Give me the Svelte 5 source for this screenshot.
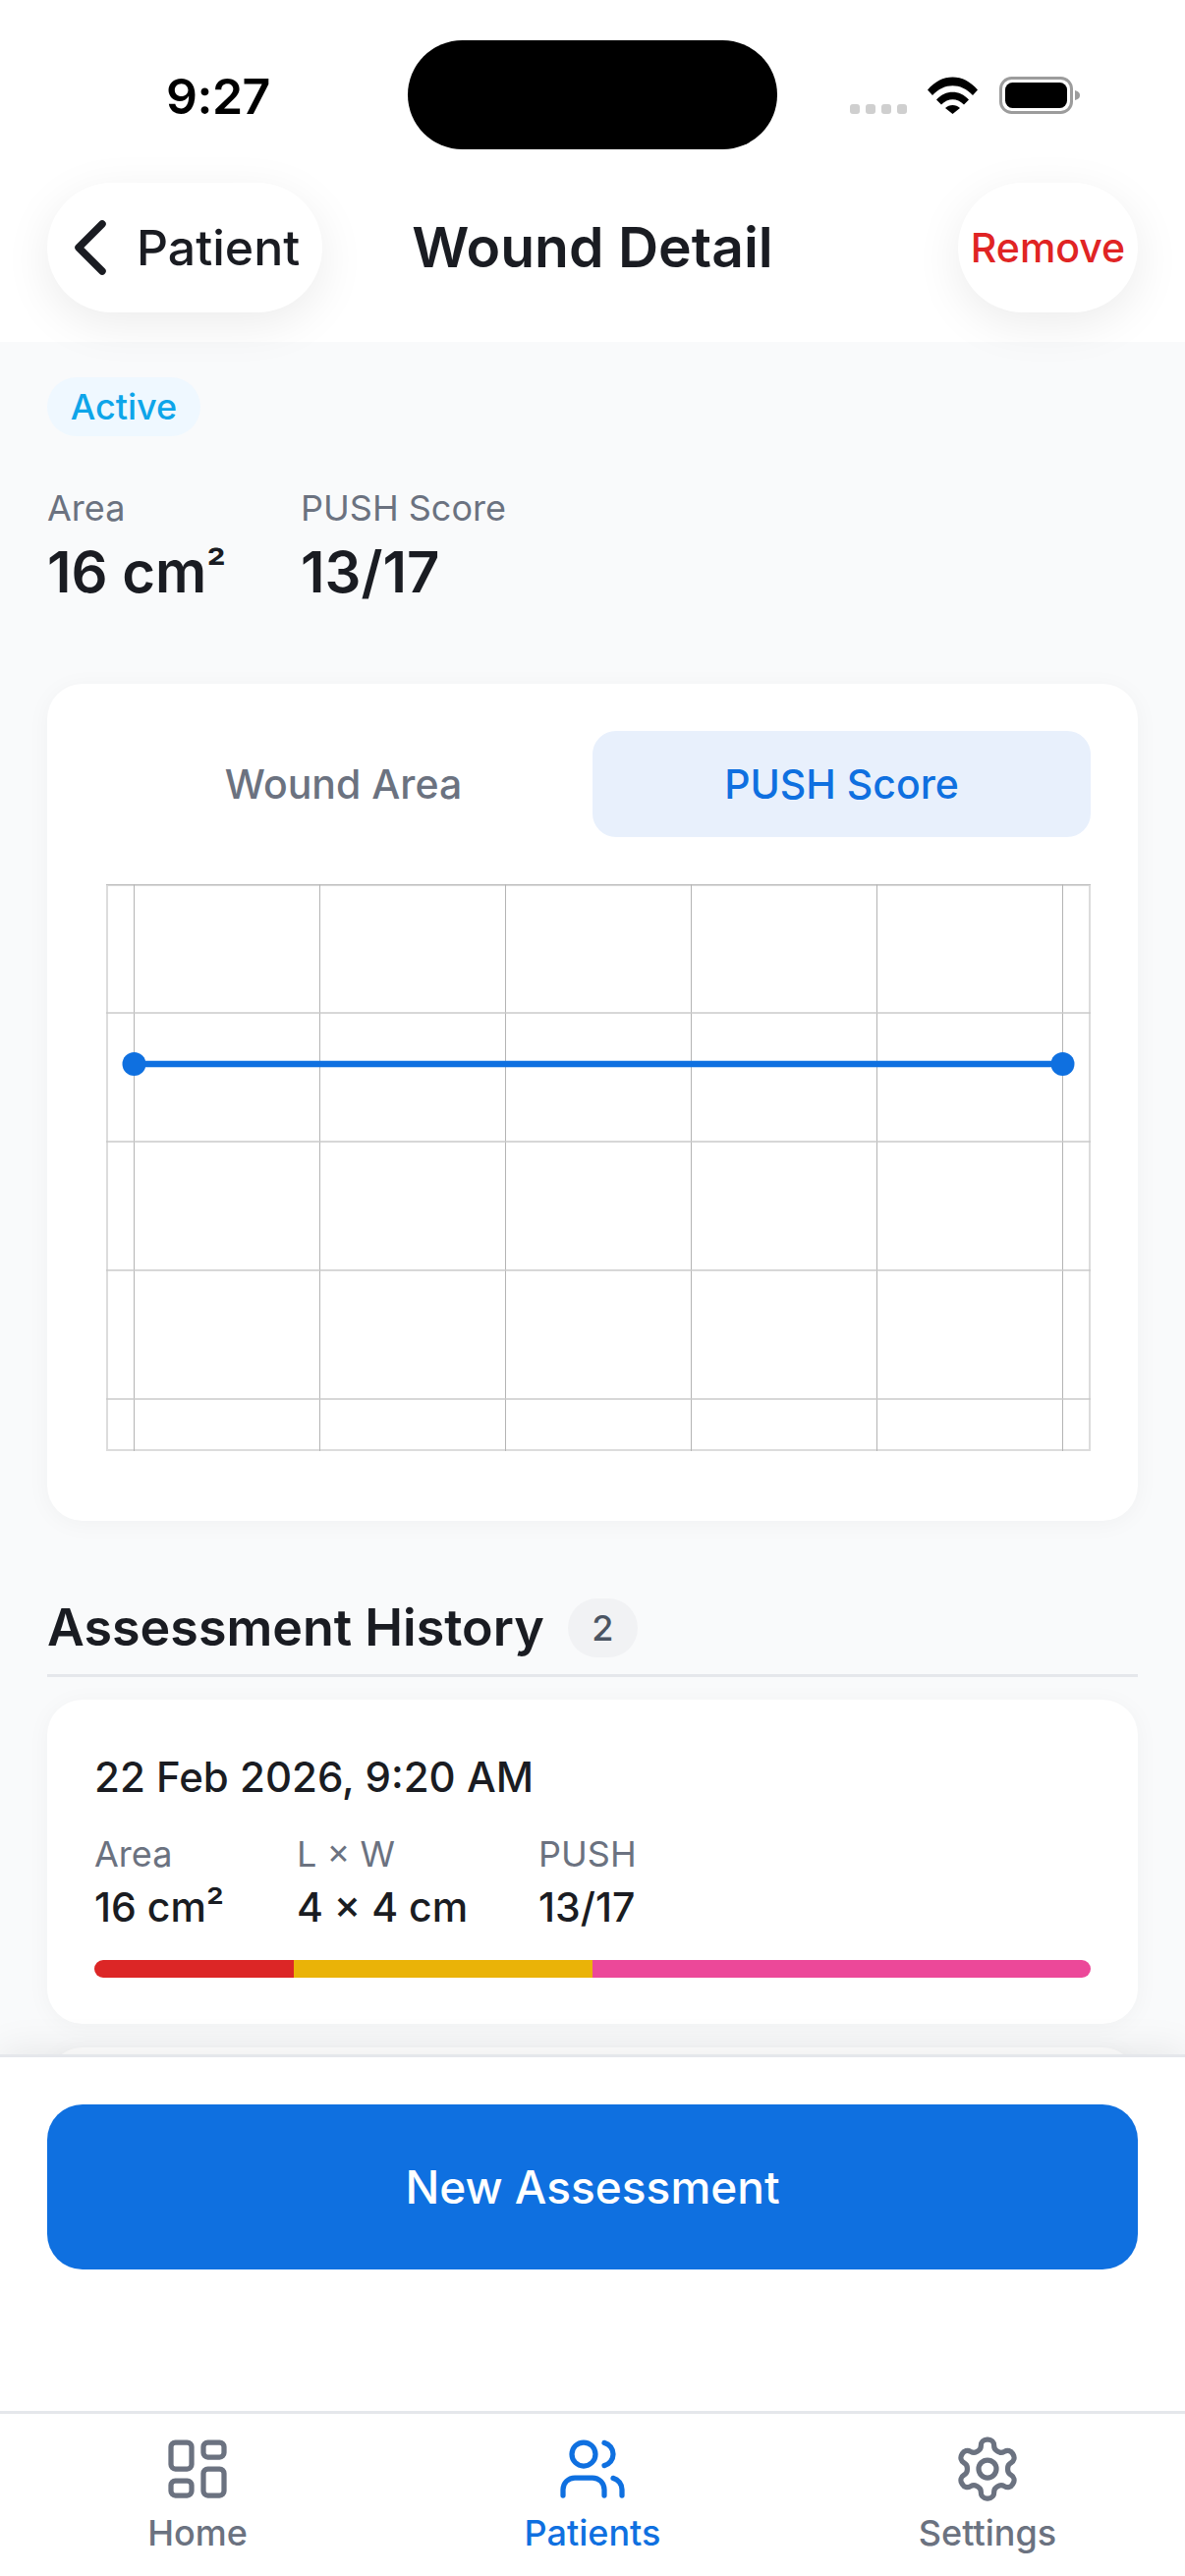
<script>
  const vLines = [28.5, 217.5, 406.5, 595.5, 784.5, 973.5];
  const hLines = [131, 262, 393, 524];
  const metrics = [
    { label: 'Area', value: '16 cm²' },
    { label: 'L × W', value: '4 × 4 cm' },
    { label: 'PUSH', value: '13/17' }
  ];
</script>

<div class="screen">
  <header class="top">
    <div class="status">
      <span class="time">9:27</span>
      <div class="island"></div>
      <div class="status-icons">
        <div class="dots"><i></i><i></i><i></i><i></i></div>
        <svg class="wifi" viewBox="0 0 51 38" width="51" height="38" aria-hidden="true">
          <path d="M0 13.5 C14 -4 37 -4 51 13.5 L46 19 C34 6 17 6 5 19 Z" fill="#000"/>
          <path d="M9 23.5 C18 13 33 13 42 23.5 L37 28.5 C30 21.5 21 21.5 14 28.5 Z" fill="#000"/>
          <path d="M18 32 C22 28 29 28 33 32 L25.5 38 Z" fill="#000"/>
        </svg>
        <svg class="battery" viewBox="0 0 83 38" width="83" height="38" aria-hidden="true">
          <rect x="1.5" y="1.5" width="72" height="35" rx="11" fill="none" stroke="#9c9c9c" stroke-width="3"/>
          <rect x="6" y="6" width="63" height="26" rx="7.5" fill="#000"/>
          <path d="M77 14 C81 15 82 17 82 19 C82 21 81 23 77 24 Z" fill="#9c9c9c"/>
        </svg>
      </div>
    </div>
    <nav class="navbar">
      <button class="pill back">
        <svg viewBox="0 0 36 60" width="36" height="60" aria-hidden="true">
          <path d="M31 6 L7 30 L31 54" fill="none" stroke="#1a1c22" stroke-width="7.5" stroke-linecap="round" stroke-linejoin="round"/>
        </svg>
        <span>Patient</span>
      </button>
      <h1>Wound Detail</h1>
      <button class="pill remove">Remove</button>
    </nav>
  </header>

  <main class="content">
    <span class="badge">Active</span>
    <div class="stats">
      <div><div class="stat-label">Area</div><div class="stat-value">16 cm<span class="sup">²</span></div></div>
      <div><div class="stat-label">PUSH Score</div><div class="stat-value">13/17</div></div>
    </div>

    <section class="card chart-card">
      <div class="tabs">
        <div class="tab">Wound Area</div>
        <div class="tab active">PUSH Score</div>
      </div>
      <svg class="chart" viewBox="0 0 1002 578" width="1002" height="578" aria-hidden="true">
        <rect x="1" y="1" width="1000" height="575" fill="none" stroke="#dcdcdc" stroke-width="2"/>
        <line x1="0" x2="1002" y1="0.5" y2="0.5" stroke="#bdbdbd" stroke-width="1"/>
        {#each vLines as x}
          <line x1={x} x2={x} y1="0" y2="577" stroke="#b4b4b4" stroke-width="1"/>
        {/each}
        {#each hLines as y}
          <line x1="0" x2="1002" y1={y} y2={y} stroke="#cacaca" stroke-width="1.5"/>
        {/each}
        <line x1="28.5" x2="974" y1="183" y2="183" stroke="#0f70e0" stroke-width="6.5"/>
        <circle cx="28.5" cy="183" r="12" fill="#0f70e0"/>
        <circle cx="973.5" cy="183" r="12" fill="#0f70e0"/>
      </svg>
    </section>

    <div class="section-head">
      <h2>Assessment History</h2>
      <span class="count">2</span>
    </div>

    <section class="card history">
      <div class="date">22 Feb 2026, 9:20 AM</div>
      <div class="metrics">
        {#each metrics as m}
          <div>
            <div class="m-label">{m.label}</div>
            <div class="m-value">{m.value}</div>
          </div>
        {/each}
      </div>
      <div class="bar"><i class="red"></i><i class="yellow"></i><i class="pink"></i></div>
    </section>
    <section class="card history"></section>
  </main>

  <div class="action">
    <button class="primary">New Assessment</button>
  </div>

  <footer class="tabbar">
    <div class="tabitem">
      <svg viewBox="0 0 24 24" width="72" height="72" fill="none" stroke="currentColor" stroke-width="1.75" stroke-linecap="round" stroke-linejoin="round" aria-hidden="true">
        <rect x="3" y="3" width="7" height="9" rx="1.5"/>
        <rect x="14" y="3" width="7" height="5" rx="1.5"/>
        <rect x="14" y="12" width="7" height="9" rx="1.5"/>
        <rect x="3" y="16" width="7" height="5" rx="1.5"/>
      </svg>
      <span>Home</span>
    </div>
    <div class="tabitem on">
      <svg viewBox="0 0 24 24" width="72" height="72" fill="none" stroke="currentColor" stroke-width="1.75" stroke-linecap="round" stroke-linejoin="round" aria-hidden="true">
        <path d="M16 21v-2a4 4 0 0 0-4-4H6a4 4 0 0 0-4 4v2"/>
        <circle cx="9" cy="7" r="4"/>
        <path d="M22 21v-2a4 4 0 0 0-3-3.87"/>
        <path d="M16 3.13a4 4 0 0 1 0 7.75"/>
      </svg>
      <span>Patients</span>
    </div>
    <div class="tabitem">
      <svg viewBox="0 0 24 24" width="72" height="72" fill="none" stroke="currentColor" stroke-width="1.75" stroke-linecap="round" stroke-linejoin="round" aria-hidden="true">
        <path d="M12.22 2h-.44a2 2 0 0 0-2 2v.18a2 2 0 0 1-1 1.73l-.43.25a2 2 0 0 1-2 0l-.15-.08a2 2 0 0 0-2.73.73l-.22.38a2 2 0 0 0 .73 2.73l.15.1a2 2 0 0 1 1 1.72v.51a2 2 0 0 1-1 1.74l-.15.09a2 2 0 0 0-.73 2.73l.22.38a2 2 0 0 0 2.73.73l.15-.08a2 2 0 0 1 2 0l.43.25a2 2 0 0 1 1 1.73V20a2 2 0 0 0 2 2h.44a2 2 0 0 0 2-2v-.18a2 2 0 0 1 1-1.73l.43-.25a2 2 0 0 1 2 0l.15.08a2 2 0 0 0 2.73-.73l.22-.39a2 2 0 0 0-.73-2.73l-.15-.08a2 2 0 0 1-1-1.74v-.5a2 2 0 0 1 1-1.74l.15-.09a2 2 0 0 0 .73-2.73l-.22-.38a2 2 0 0 0-2.73-.73l-.15.08a2 2 0 0 1-2 0l-.43-.25a2 2 0 0 1-1-1.73V4a2 2 0 0 0-2-2z"/>
        <circle cx="12" cy="12" r="3"/>
      </svg>
      <span>Settings</span>
    </div>
  </footer>
</div>

<style>
  :global(body) {
    margin: 0;
    background: #f9fafb;
  }
  .screen {
    width: 1206px;
    height: 2622px;
    display: flex;
    flex-direction: column;
    overflow: hidden;
    background: #f9fafb;
    font-family: Inter, "Liberation Sans", sans-serif;
    color: #1a1c22;
  }
  .top {
    height: 348px;
    flex: none;
    background: #fff;
    position: relative;
    z-index: 2;
  }
  .status {
    height: 186px;
    position: relative;
  }
  .time {
    position: absolute;
    left: 169px;
    top: 69px;
    font-size: 50px;
    line-height: 58px;
    font-weight: 600;
    color: #000;
    letter-spacing: -0.5px;
  }
  .island {
    position: absolute;
    left: 415px;
    top: 41px;
    width: 376px;
    height: 111px;
    border-radius: 56px;
    background: #000;
  }
  .status-icons {
    position: absolute;
    left: 865px;
    top: 78px;
    display: flex;
    align-items: flex-start;
  }
  .dots {
    display: flex;
    gap: 6px;
    margin-top: 28px;
    margin-right: 21px;
  }
  .dots i {
    width: 10px;
    height: 10px;
    border-radius: 3px;
    background: #cfcfcf;
  }
  .wifi { margin-right: 22px; }
  .navbar {
    display: flex;
    justify-content: space-between;
    align-items: center;
    padding: 0 48px;
    position: relative;
  }
  .pill {
    height: 132px;
    border: 0;
    border-radius: 66px;
    background: #fff;
    font: inherit;
    box-shadow: 0 12px 48px rgba(0, 0, 0, 0.08);
    display: flex;
    align-items: center;
    padding: 0;
  }
  .back {
    width: 280px;
    padding-left: 25px;
    gap: 30px;
    font-size: 50px;
    font-weight: 500;
    color: #1a1c22;
  }
  .remove {
    width: 183px;
    justify-content: center;
    font-size: 41px;
    font-weight: 500;
    color: #e02424;
  }
  h1 {
    position: absolute;
    left: 0;
    right: 0;
    top: 30px;
    margin: 0;
    text-align: center;
    font-size: 57px;
    line-height: 72px;
    font-weight: 600;
    color: #1a1c22;
    pointer-events: none;
  }
  .content {
    flex: 1;
    min-height: 0;
    overflow: hidden;
    padding: 36px 48px 0;
  }
  .badge {
    display: block;
    width: 156px;
    height: 60px;
    line-height: 60px;
    text-align: center;
    border-radius: 30px;
    background: #eff8ff;
    color: #0ea5e9;
    font-size: 36px;
    font-weight: 500;
  }
  .stats {
    display: grid;
    grid-template-columns: 258px auto;
    justify-content: start;
    margin-top: 49px;
  }
  .stat-label {
    font-size: 36px;
    line-height: 48px;
    color: #6b7280;
  }
  .stat-value {
    font-size: 58px;
    line-height: 72px;
    font-weight: 600;
    margin-top: 5px;
  }
  .sup {
    font-size: 0.75em;
    line-height: 0;
    vertical-align: 0.2em;
  }
  .card {
    background: #fff;
    border-radius: 36px;
    box-shadow: 0 3px 24px rgba(0, 0, 0, 0.04);
  }
  .chart-card {
    height: 852px;
    margin-top: 78px;
    padding: 48px;
    box-sizing: border-box;
  }
  .tabs {
    display: grid;
    grid-template-columns: 1fr 1fr;
    height: 108px;
    margin-bottom: 48px;
  }
  .tab {
    display: flex;
    align-items: center;
    justify-content: center;
    border-radius: 24px;
    font-size: 41px;
    font-weight: 500;
    color: #6b7280;
  }
  .tab.active {
    background: #e8f0fc;
    color: #0f70e0;
  }
  .chart { display: block; margin-left: 12px; }
  .section-head {
    display: flex;
    align-items: center;
    gap: 24px;
    margin-top: 79px;
    height: 60px;
    padding-bottom: 17px;
    border-bottom: 3px solid #e5e7eb;
  }
  h2 {
    margin: 0;
    font-size: 52px;
    line-height: 60px;
    font-weight: 600;
    color: #1a1c22;
  }
  .count {
    min-width: 71px;
    height: 60px;
    line-height: 60px;
    text-align: center;
    border-radius: 30px;
    background: #f1f2f4;
    color: #4b5563;
    font-size: 36px;
    font-weight: 500;
  }
  .history {
    margin-top: 23px;
    height: 330px;
    padding: 52px 48px 0;
    box-sizing: border-box;
    margin-bottom: 24px;
  }
  .history + .history { margin-top: 0; }
  .date {
    font-size: 42px;
    line-height: 54px;
    font-weight: 500;
  }
  .metrics {
    display: grid;
    grid-template-columns: 206px 246px auto;
    justify-content: start;
    margin-top: 27px;
  }
  .m-label {
    font-size: 36px;
    line-height: 48px;
    color: #6b7280;
  }
  .m-value {
    font-size: 41px;
    line-height: 54px;
    font-weight: 500;
    margin-top: 3px;
  }
  .bar {
    display: flex;
    height: 18px;
    border-radius: 9px;
    overflow: hidden;
    margin-top: 27px;
  }
  .bar i { display: block; }
  .red { width: 20%; background: #dc2626; }
  .yellow { width: 30%; background: #eab308; }
  .pink { width: 50%; background: #ec4899; }
  .action {
    flex: none;
    height: 363px;
    box-sizing: border-box;
    background: #fff;
    border-top: 3px solid #e5e7eb;
    padding: 48px 48px 0;
    box-shadow: 0 -6px 36px rgba(0, 0, 0, 0.07);
    position: relative;
    z-index: 1;
  }
  .primary {
    display: block;
    width: 100%;
    height: 168px;
    border: 0;
    border-radius: 36px;
    background: #0f70e0;
    color: #fff;
    font: inherit;
    font-size: 46px;
    font-weight: 500;
  }
  .tabbar {
    flex: none;
    height: 168px;
    box-sizing: border-box;
    border-top: 3px solid #e5e7eb;
    background: #fff;
    display: grid;
    grid-template-columns: 1fr 1fr 1fr;
    position: relative;
    z-index: 1;
  }
  .tabitem {
    display: flex;
    flex-direction: column;
    align-items: center;
    color: #6b7280;
    padding-top: 20px;
    font-size: 36px;
    font-weight: 500;
    line-height: 44px;
  }
  .tabitem svg { margin-bottom: 7px; }
  .tabitem.on { color: #0f70e0; }
</style>
